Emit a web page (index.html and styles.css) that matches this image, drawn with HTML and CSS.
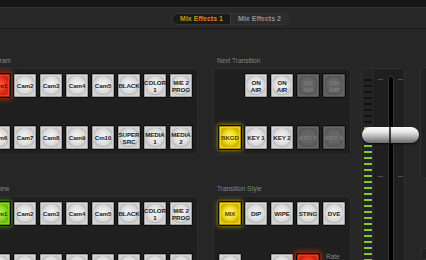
FILE: index.html
```html
<!DOCTYPE html>
<html lang="en">
<head>
  <meta charset="UTF-8">
  <meta name="viewport" content="width=device-width, initial-scale=1.0">
  <link rel="stylesheet" href="styles.css">
  <title>Switcher</title>
</head>
<body>
  <div class="topbar"></div>
  <div class="header">
    <div class="tabs">
      <div class="tab active">Mix Effects 1</div>
      <div class="tab">Mix Effects 2</div>
    </div>
  </div>

  <div class="content">
    <!-- program / preview buses -->
    <div class="col buses">
      <div class="label">Program</div>
      <div class="panel">
        <div class="row">
          <div class="key red">Cam1</div>
          <div class="key">Cam2</div>
          <div class="key">Cam3</div>
          <div class="key">Cam4</div>
          <div class="key">Cam5</div>
          <div class="key">BLACK</div>
          <div class="key">COLOR<br>1</div>
          <div class="key">M/E 2<br>PROG</div>
        </div>
        <div class="row">
          <div class="key">Cam6</div>
          <div class="key">Cam7</div>
          <div class="key">Cam8</div>
          <div class="key">Cam9</div>
          <div class="key">Cm10</div>
          <div class="key">SUPER<br>SRC</div>
          <div class="key">MEDIA<br>1</div>
          <div class="key">MEDIA<br>2</div>
        </div>
      </div>

      <div class="label spaced">Preview</div>
      <div class="panel">
        <div class="row">
          <div class="key green">Cam1</div>
          <div class="key">Cam2</div>
          <div class="key">Cam3</div>
          <div class="key">Cam4</div>
          <div class="key">Cam5</div>
          <div class="key">BLACK</div>
          <div class="key">COLOR<br>1</div>
          <div class="key">M/E 2<br>PROG</div>
        </div>
        <div class="row">
          <div class="key">Cam6</div>
          <div class="key">Cam7</div>
          <div class="key">Cam8</div>
          <div class="key">Cam9</div>
          <div class="key">Cm10</div>
          <div class="key">SUPER<br>SRC</div>
          <div class="key">MEDIA<br>1</div>
          <div class="key">MEDIA<br>2</div>
        </div>
      </div>
    </div>

    <!-- transition controls -->
    <div class="col trans">
      <div class="label">Next Transition</div>
      <div class="panel">
        <div class="row">
          <div class="slot-empty"></div>
          <div class="key">ON<br>AIR</div>
          <div class="key">ON<br>AIR</div>
          <div class="key dim">ON<br>AIR</div>
          <div class="key dim">ON<br>AIR</div>
        </div>
        <div class="row">
          <div class="key yellow">BKGD</div>
          <div class="key">KEY 1</div>
          <div class="key">KEY 2</div>
          <div class="key dim">KEY 3</div>
          <div class="key dim">KEY 4</div>
        </div>
      </div>

      <div class="label spaced">Transition Style</div>
      <div class="panel">
        <div class="row">
          <div class="key yellow">MIX</div>
          <div class="key">DIP</div>
          <div class="key">WIPE</div>
          <div class="key">STING</div>
          <div class="key">DVE</div>
        </div>
        <div class="row">
          <div class="key">&nbsp;</div>
          <div class="slot-empty"></div>
          <div class="key">&nbsp;</div>
          <div class="key red">&nbsp;</div>
          <div class="rate">Rate</div>
        </div>
      </div>
    </div>

    <!-- t-bar -->
    <div class="fader">
      <div class="scale">
        <i></i><i></i><i></i><i></i><i></i><i></i><i></i><i></i>
        <i class="on"></i><i class="on"></i><i class="on"></i><i class="on"></i>
        <i class="on"></i><i class="on"></i><i class="on"></i><i class="on"></i>
        <i class="on"></i><i class="on"></i><i class="on"></i><i class="on"></i>
        <i class="on"></i><i class="on"></i><i class="on"></i><i class="on"></i>
        <i class="on"></i><i class="on"></i><i class="on"></i><i class="on"></i>
        <i class="on"></i><i class="on"></i><i class="on"></i>
      </div>
      <div class="track">
        <div class="marks left"><i></i><i></i></div>
        <div class="groove"></div>
        <div class="marks right"><i></i><i></i></div>
      </div>
      <div class="handle"></div>
    </div>

    <div class="side">
      <div class="side-panel top"></div>
      <div class="side-panel"></div>
    </div>
  </div>
</body>
</html>
```

FILE: styles.css
```css
* {
  margin: 0;
  padding: 0;
  box-sizing: border-box;
}

html, body {
  width: 426px;
  height: 260px;
  overflow: hidden;
}

body {
  background-color: #262626;
  font-family: "Liberation Sans", Arial, sans-serif;
}

.topbar {
  height: 8px;
  background-color: #161616;
  border-bottom: 1px solid #303030;
}

.header {
  height: 21px;
  background-color: #282828;
  border-bottom: 1px solid #1a1a1a;
  padding: 5px 0 0 172px;
}

.tabs {
  display: flex;
  width: 117px;
  height: 12px;
  border-radius: 6px;
  border: 1px solid #353535;
  overflow: hidden;
}

.tab {
  flex: 1;
  font-size: 7px;
  font-weight: bold;
  line-height: 10px;
  text-align: center;
  color: #8f8f8f;
  background-color: #2c2c2c;
}

.tab.active {
  color: #d9881c;
  background-color: #1a1a1a;
  border-right: 1px solid #3a3a3a;
}

.content {
  display: flex;
  align-items: flex-start;
  margin-left: -18px;
  padding-top: 27px;
}

.col {
  display: flex;
  flex-direction: column;
}

.buses {
  width: 216px;
}

.trans {
  width: 138px;
  margin-left: 15px;
}

.label {
  height: 9px;
  line-height: 9px;
  font-size: 6.5px;
  color: #858585;
  padding-left: 4px;
  margin-bottom: 3px;
}

.label.spaced {
  margin-top: 29px;
}

.panel {
  display: flex;
  flex-direction: column;
  gap: 27px;
  padding: 4px;
  background-color: #1f1f1f;
  border: 1px solid #2d2d2d;
  border-radius: 4px;
}

.row {
  display: flex;
  gap: 2px;
}

.slot-empty {
  width: 24px;
  height: 25px;
}

.key {
  width: 24px;
  height: 25px;
  display: flex;
  align-items: center;
  justify-content: center;
  text-align: center;
  font-size: 6.2px;
  font-weight: bold;
  line-height: 7px;
  letter-spacing: -0.1px;
  color: #222;
  border: 1px solid #0c0c0c;
  border-radius: 2px;
  background: radial-gradient(circle at 50% 48%, #f6f6f6 0, #e6e6e6 5px, #d6d6d6 8.5px, #b6b6b6 9.5px, #cdcdcd 10.5px, #dadada 14px);
  box-shadow: inset 0 0 0 1px #a0a0a0, inset 0 0 0 2px #d6d6d6;
}

.key.dim {
  color: #7c7c7c;
  background: radial-gradient(circle at 50% 48%, #686868 0, #626262 7px, #545454 9.5px, #5e5e5e 10.5px, #646464 14px);
  box-shadow: inset 0 0 0 1px #505050, inset 0 0 0 2px #666;
}

.key.yellow {
  color: #4d3f00;
  background: radial-gradient(circle at 50% 48%, #fff38a 0, #f2dc2a 6px, #dcc000 9px, #c4a800 10px, #d8bc08 11px, #e6cc18 14px);
  box-shadow: 0 0 4px 1px rgba(225, 200, 20, 0.55), inset 0 0 0 1px #a88f00, inset 0 0 0 2px #e8d230;
}

.key.red {
  color: #4a0c04;
  background: radial-gradient(circle at 50% 48%, #ff6a4a 0, #ee3a20 6px, #d82a14 9px, #c0200e 10px, #d62a16 11px, #e2341c 14px);
  box-shadow: 0 0 5px 2px rgba(240, 50, 20, 0.55), inset 0 0 0 1px #a0200c, inset 0 0 0 2px #ea3c22;
}

.key.green {
  color: #1f3a00;
  background: radial-gradient(circle at 50% 48%, #b6f060 0, #92dc2e 6px, #78c818 9px, #66ac10 10px, #74c216 11px, #82cc1e 14px);
  box-shadow: 0 0 4px 1px rgba(120, 210, 30, 0.55), inset 0 0 0 1px #5a9a0a, inset 0 0 0 2px #8ad424;
}

.rate {
  width: 24px;
  font-size: 6.5px;
  line-height: 8px;
  color: #858585;
  padding-left: 4px;
}

/* t-bar */
.fader {
  position: relative;
  display: flex;
  width: 44px;
  height: 194px;
  margin-top: 12px;
  margin-left: 10px;
  background-color: #242424;
  border: 1px solid #2f2f2f;
  border-bottom: 0;
  border-radius: 4px 4px 0 0;
}

.scale {
  width: 14px;
  display: flex;
  flex-direction: column;
  gap: 4px;
  padding: 10px 0 0 2px;
  border-right: 1px solid #1a1a1a;
  overflow: hidden;
}

.scale i {
  display: block;
  flex-shrink: 0;
  width: 8px;
  height: 2px;
  background-color: #121212;
}

.scale i.on {
  background-color: #86c92a;
}

.track {
  flex: 1;
  display: flex;
  background-color: #1f1f1f;
}

.marks {
  display: flex;
  flex-direction: column;
  gap: 96px;
  padding-top: 10px;
}

.marks.left {
  width: 13px;
  padding-left: 2px;
}

.marks.right {
  width: 11px;
  padding-left: 5px;
}

.marks i {
  display: block;
  width: 5px;
  height: 1px;
  background-color: #4e4e4e;
}

.groove {
  width: 4px;
  margin-top: 8px;
  background-color: #000;
  border-radius: 2px 2px 0 0;
  box-shadow: 0 0 0 1px #333;
}

.handle {
  position: absolute;
  left: 0;
  top: 58px;
  width: 57px;
  height: 16px;
  border-radius: 8px;
  background: linear-gradient(to bottom, #fbfbfb 0%, #e8e8e8 30%, #bdbdbd 55%, #8e8e8e 80%, #6c6c6c 100%);
  box-shadow: 0 1px 2px rgba(0, 0, 0, 0.8);
}

.handle::after {
  content: "";
  position: absolute;
  left: 27px;
  top: 0;
  width: 2px;
  height: 16px;
  background: linear-gradient(to bottom, #555, #222);
}

.side {
  display: flex;
  flex-direction: column;
  gap: 69px;
  margin-top: 11px;
  margin-left: 15px;
}

.side-panel {
  width: 20px;
  height: 12px;
  background-color: #222;
  border: 1px solid #303030;
  border-radius: 4px;
}

.side-panel.top {
  height: 112px;
}
```
